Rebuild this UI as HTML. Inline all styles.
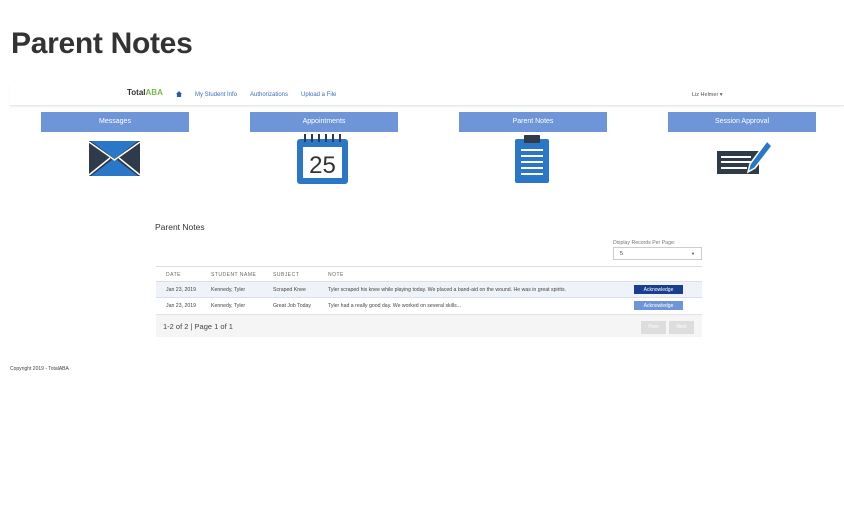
<!DOCTYPE html>
<html><head><meta charset="utf-8"><style>
*{margin:0;padding:0;box-sizing:border-box}
body{width:844px;height:518px;background:#fff;font-family:"Liberation Sans",sans-serif;position:relative;overflow:hidden;color:#333}
.a{position:absolute}
.btn{position:absolute;top:112px;width:148px;height:20px;background:#6f95d9;color:#fff;font-size:7px;text-align:center;line-height:20px}
.nav{font-size:6px;color:#3a6fc4;top:92px}
.th{font-size:5px;color:#666;letter-spacing:.5px;top:272px}
.td{font-size:5.2px;color:#444}
.ack{position:absolute;left:634px;width:49px;height:9px;color:#fff;font-size:5px;text-align:center;line-height:9px;padding-top:0}
</style></head><body>
<div class="a" style="left:11px;top:27px;font-size:30px;font-weight:bold;color:#333;letter-spacing:-0.3px">Parent Notes</div>
<div class="a" style="left:10px;top:84px;width:834px;height:22px;border-bottom:1px solid #e8e8e8;box-shadow:0 1px 2px #eee"></div>
<div class="a" style="left:127px;top:88px;font-size:8px;font-weight:bold;color:#333">Total<span style="color:#7ab648">ABA</span></div>
<div class="a" style="left:176px;top:91px;width:6px;height:6px;background:#2a5aa8;clip-path:polygon(50% 0,100% 50%,85% 50%,85% 100%,15% 100%,15% 50%,0 50%)"></div>
<div class="a nav" style="left:195px">My Student Info</div>
<div class="a nav" style="left:250px">Authorizations</div>
<div class="a nav" style="left:301px">Upload a File</div>
<div class="a" style="left:692px;top:92px;font-size:5.5px;color:#555">Liz Helmer ▾</div>
<div class="btn" style="left:41px">Messages</div>
<div class="btn" style="left:250px">Appointments</div>
<div class="btn" style="left:459px">Parent Notes</div>
<div class="btn" style="left:668px">Session Approval</div>
<svg class="a" style="left:89px;top:141px" width="51" height="35" viewBox="0 0 51 35">
<rect width="51" height="35" fill="#2f3a4a"/>
<polygon points="2,0 49,0 25.5,18" fill="#2a77c8"/>
<polygon points="2,35 49,35 25.5,17" fill="#2a77c8"/>
<path d="M0,1 L25.5,19 L51,1 M0,34 L21,17 M51,34 L30,17" stroke="#fff" stroke-width="1.5" fill="none"/>
</svg>
<svg class="a" style="left:297px;top:133px" width="51" height="51" viewBox="0 0 51 51">
<rect x="0" y="6" width="51" height="45" rx="3" fill="#2a77c8"/>
<rect x="6" y="14" width="39" height="31" fill="#fff"/>
<g stroke="#2f3a4a" stroke-width="2"><path d="M8,1v8M15,1v8M22,1v8M29,1v8M36,1v8M43,1v8"/></g>
<text x="25.5" y="40" font-size="24" text-anchor="middle" fill="#333" font-family="Liberation Sans">25</text>
</svg>
<svg class="a" style="left:515px;top:135px" width="34" height="48" viewBox="0 0 34 48">
<rect x="0" y="4" width="34" height="44" rx="2" fill="#2a77c8"/>
<rect x="9" y="0" width="16" height="8" rx="1" fill="#2f3a4a"/>
<g stroke="#fff" stroke-width="2"><path d="M6,15h22M6,21h22M6,27h22M6,33h22M6,39h22"/></g>
</svg>
<svg class="a" style="left:717px;top:141px" width="55" height="34" viewBox="0 0 55 34">
<rect x="0" y="10" width="42" height="23" fill="#2f3a4a"/>
<g stroke="#fff" stroke-width="2"><path d="M4,16h30M4,21h30M4,27h26"/></g>
<path d="M50,0 L55,5 L38,27 L31,31 L33,23 Z" fill="#2a77c8" stroke="#fff" stroke-width="1.5"/>
</svg>
<div class="a" style="left:155px;top:222px;font-size:8.5px;color:#333">Parent Notes</div>
<div class="a" style="left:613px;top:240px;font-size:5.2px;color:#777">Display Records Per Page:</div>
<div class="a" style="left:613px;top:247px;width:89px;height:13px;border:1px solid #ccc;font-size:5.5px;padding:3px 6px;color:#444">5<span style="float:right;font-size:4px">▼</span></div>
<div class="a" style="left:156px;top:266px;width:546px;height:71px;border-top:1px solid #ddd"></div>
<div class="a th" style="left:166px">DATE</div>
<div class="a th" style="left:211px">STUDENT NAME</div>
<div class="a th" style="left:273px">SUBJECT</div>
<div class="a th" style="left:328px">NOTE</div>
<div class="a" style="left:156px;top:281px;width:546px;height:17px;background:#eef2f9;border-top:1px solid #dde;border-bottom:1px solid #dde"></div>
<div class="a td" style="left:166px;top:287px">Jan 23, 2019</div>
<div class="a td" style="left:211px;top:287px">Kennedy, Tyler</div>
<div class="a td" style="left:273px;top:287px">Scraped Knee</div>
<div class="a td" style="left:328px;top:287px">Tyler scraped his knee while playing today. We placed a band-aid on the wound. He was in great spirits.</div>
<div class="ack" style="top:285px;background:#1a3f8f;line-height:10px">Acknowledge</div>
<div class="a td" style="left:166px;top:303px">Jan 23, 2019</div>
<div class="a td" style="left:211px;top:303px">Kennedy, Tyler</div>
<div class="a td" style="left:273px;top:303px">Great Job Today</div>
<div class="a td" style="left:328px;top:303px">Tyler had a really good day. We worked on several skills...</div>
<div class="ack" style="top:301px;background:#6f95d9;line-height:10px">Acknowledge</div>
<div class="a" style="left:156px;top:314px;width:546px;height:23px;background:#f5f5f5;border-top:1px solid #e3e3e3"></div>
<div class="a" style="left:163px;top:322px;font-size:7.5px;color:#444">1-2 of 2 | Page 1 of 1</div>
<div class="a" style="left:641px;top:321px;width:25px;height:13px;background:#ddd;color:#fff;font-size:5px;text-align:center;line-height:13px">Prev</div>
<div class="a" style="left:669px;top:321px;width:25px;height:13px;background:#ddd;color:#fff;font-size:5px;text-align:center;line-height:13px">Next</div>
<div class="a" style="left:10px;top:366px;font-size:5px;color:#444">Copyright 2019 - TotalABA</div>
</body></html>
